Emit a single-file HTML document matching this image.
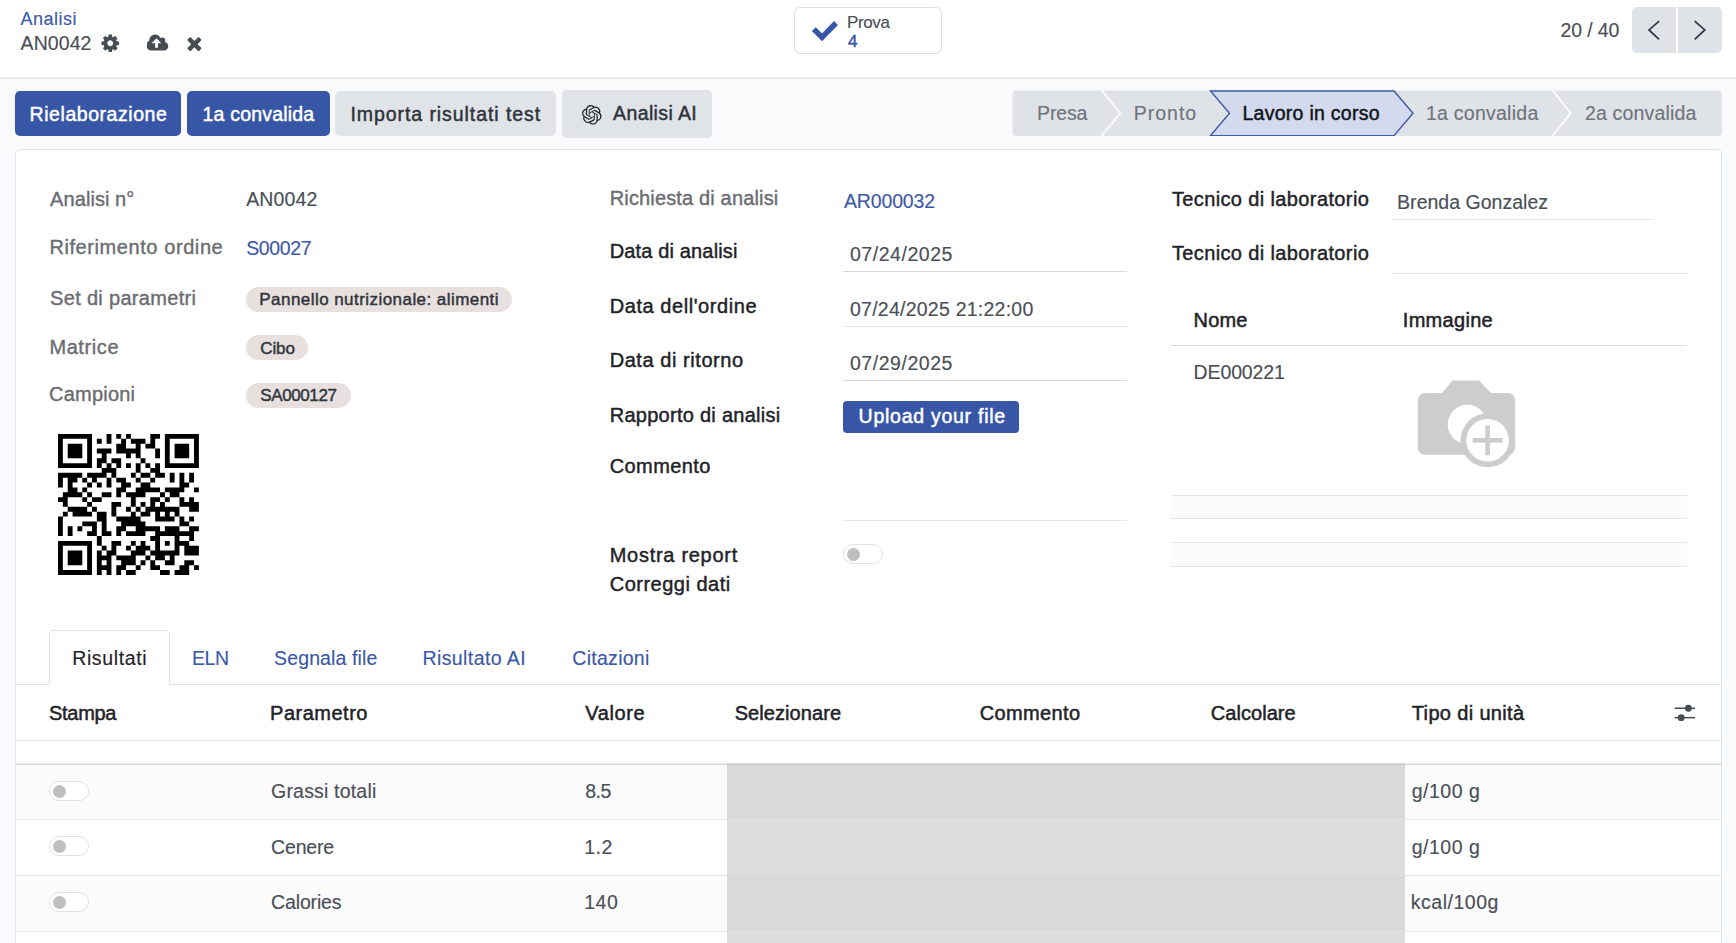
<!DOCTYPE html>
<html lang="it">
<head>
<meta charset="utf-8">
<title>Analisi - AN0042</title>
<style>
*{box-sizing:border-box}
html,body{margin:0;padding:0}
body{width:1736px;height:943px;overflow:hidden;position:relative;background:#f9fafb;font-family:"Liberation Sans",sans-serif;font-size:19.5px;color:#4a4f57}
.t{position:absolute;white-space:pre;line-height:normal;margin:0;padding:0}
.abs{position:absolute}
header.cp{position:absolute;left:0;top:0;width:1736px;height:79px;background:#fff;border-bottom:1px solid #e4e7eb}
header.cp:after{content:'';position:absolute;left:0;top:77px;width:100%;height:1px;background:#eef0f3}
.statbtn{position:absolute;left:794px;top:7px;width:148px;height:46.5px;border:1px solid #d9dde6;border-radius:6px;background:#fff}
.pager button{position:absolute;top:7px;height:46px;border:0;padding:0;background:#dfe2e7}
.pager .prev{left:1632px;width:44px;border-radius:5px 0 0 5px}
.pager .next{left:1678px;width:44px;border-radius:0 5px 5px 0}
.btn{position:absolute;border:0;border-radius:5px;padding:0}
.btn.pri{background:#3757a6}
.btn.sec{background:#e0e3e8}
.sheet{position:absolute;left:15px;top:149px;width:1707px;height:820px;background:#fff;border:1px solid #dfe3e8;border-radius:5px 5px 0 0}
.chip{position:absolute;height:25px;border-radius:13px;background:#e8e0df}
.uline{position:absolute;height:1px;background:#d5dae0}
.tog{position:absolute;width:40px;height:20px;border:1px solid #dde1e5;border-radius:10px;background:#fff}
.tog i{position:absolute;left:3px;top:2.5px;width:13px;height:13px;border-radius:50%;background:#bebebe}
.tab-active{position:absolute;left:49px;top:630px;width:121px;height:55px;border:1px solid #dfe3e8;border-bottom-color:#fff;border-radius:5px 5px 0 0;background:#fff}
.hl{position:absolute;left:16px;width:1705px;height:1px;background:#dfe3e8}
.row{position:absolute;left:16px;width:1705px}
.greycell{position:absolute;left:727px;width:678px;background:#d9d9d9}
</style>
</head>
<body>

<!-- ======= control panel ======= -->
<header class="cp">
  <nav class="breadcrumb"><span class="t" style="left:20.60px;top:9px;font-size:18px;color:#3b59a6;letter-spacing:0.496px;-webkit-text-stroke:0.15px #3b59a6;">Analisi</span><span class="t" style="left:20.60px;top:32px;font-size:19.5px;color:#4a4f57;letter-spacing:0.075px;-webkit-text-stroke:0.15px #4a4f57;">AN0042</span></nav>
  <svg class="abs" style="left:99.93px;top:33.13px" width="20.53" height="20.53" viewBox="0 0 1792 1792"><path fill="#474b52" d="M1152 896q0-106-75-181t-181-75-181 75-75 181 75 181 181 75 181-75 75-181zm512-109v222q0 12-8 23t-20 13l-185 28q-19 54-39 91 35 50 107 138 10 12 10 25t-9 23q-27 37-99 108t-94 71q-12 0-26-9l-138-108q-44 23-91 38-16 136-29 186-7 28-36 28h-222q-14 0-24.500-8.500t-11.500-21.500l-28-184q-49-16-90-37l-141 107q-10 9-25 9-14 0-25-11-126-114-165-168-7-10-7-23 0-12 8-23 15-21 51-66.500t54-70.500q-27-50-41-99l-183-27q-13-2-21-12.500t-8-23.500v-222q0-12 8-23t19-13l186-28q14-46 39-92-40-57-107-138-10-12-10-24 0-10 9-23 26-36 98.500-107.500t94.500-71.500q13 0 26 10l138 107q44-23 91-38 16-136 29-186 7-28 36-28h222q14 0 24.500 8.500t11.500 21.500l28 184q49 16 90 37l142-107q9-9 24-9 13 0 25 10 129 119 165 170 7 8 7 22 0 12-8 23-15 21-51 66.500t-54 70.500q26 50 41 98l183 28q13 2 21 12.500t8 23.500z"/></svg>
  <svg class="abs" style="left:147.3px;top:32.67px" width="22" height="20.53" viewBox="0 0 1920 1792"><path fill="#474b52" d="M1216 864q0-14-9-23l-352-352q-9-9-23-9t-23 9l-351 351q-10 12-10 24 0 14 9 23t23 9h224v352q0 13 9.500 22.500t22.500 9.500h192q13 0 22.500-9.500t9.500-22.500v-352h224q13 0 22.500-9.500t9.500-22.500zm640 288q0 159-112.500 271.500t-271.500 112.500h-1088q-185 0-316.500-131.500t-131.500-316.500q0-130 70-240t188-165q-2-30-2-43 0-212 150-362t362-150q156 0 285.500 87t188.500 231q71-62 166-62 106 0 181 75t75 181q0 76-41 138 130 31 213.500 135.500t83.500 238.500z"/></svg>
  <svg class="abs" style="left:184.2px;top:33.05px" width="20.79" height="20.79" viewBox="0 0 1792 1792"><path fill="#474b52" d="M1490 1322q0 40-28 68l-136 136q-28 28-68 28t-68-28l-294-294-294 294q-28 28-68 28t-68-28l-136-136q-28-28-28-68t28-68l294-294-294-294q-28-28-28-68t28-68l136-136q28-28 68-28t68 28l294 294 294-294q28-28 68-28t68 28l136 136q28 28 28 68t-28 68l-294 294 294 294q28 28 28 68z"/></svg>
  <div class="statbtn"></div>
  <svg class="abs" style="left:805px;top:15px" width="40" height="32" viewBox="805 15 40 32"><polyline points="813.85,29.1 822,37.3 836,23.0" fill="none" stroke="#3757a6" stroke-width="5.5" stroke-linejoin="miter"/></svg>
  <span class="t" style="left:847.00px;top:13px;font-size:17px;color:#4a4f57;letter-spacing:-0.389px;-webkit-text-stroke:0.15px #4a4f57;">Prova</span><span class="t" style="left:848.00px;top:32px;font-size:17px;color:#3757a6;-webkit-text-stroke:0.5px #3757a6;">4</span>
  <div class="pager"><span class="t" style="left:1560.40px;top:19px;font-size:19.5px;color:#4a4f57;letter-spacing:-0.098px;-webkit-text-stroke:0.15px #4a4f57;">20 / 40</span>
    <button class="prev" aria-label="Precedente"></button>
    <button class="next" aria-label="Successivo"></button>
    <svg class="abs" style="left:1632px;top:7px" width="90" height="46" viewBox="1632 7 90 46"><polyline points="1659.1,21.1 1649,29.9 1659.1,39.3" fill="none" stroke="#2f3640" stroke-width="1.7"/><polyline points="1694.7,21.1 1704.8,29.9 1694.7,39.3" fill="none" stroke="#2f3640" stroke-width="1.7"/></svg>
  </div>
</header>

<!-- ======= status bar ======= -->
<section class="statusbar">
  <button class="btn pri" style="left:15px;top:91px;width:166px;height:45px"></button>
  <button class="btn pri" style="left:187px;top:91px;width:143px;height:45px"></button>
  <button class="btn sec" style="left:335px;top:91px;width:221px;height:45px"></button>
  <button class="btn sec" style="left:562px;top:90px;width:150px;height:47.5px"></button>
  <span class="t" style="left:29.60px;top:103px;font-size:19.5px;color:#ffffff;letter-spacing:0.551px;-webkit-text-stroke:0.45px #ffffff;">Rielaborazione</span><span class="t" style="left:202.60px;top:103px;font-size:19.5px;color:#ffffff;letter-spacing:0.177px;-webkit-text-stroke:0.45px #ffffff;">1a convalida</span><span class="t" style="left:350.40px;top:103px;font-size:19.5px;color:#2e333b;letter-spacing:0.937px;-webkit-text-stroke:0.45px #2e333b;">Importa risultati test</span><span class="t" style="left:613.00px;top:102px;font-size:19.5px;color:#2e333b;letter-spacing:0.393px;-webkit-text-stroke:0.45px #2e333b;">Analisi AI</span>
  <svg class="abs" style="left:582.2px;top:104.8px;overflow:visible" width="19.6" height="19.6" viewBox="0 0 24 24"><path fill="#22262b" d="M22.2819 9.8211a5.9847 5.9847 0 0 0-.5157-4.9108 6.0462 6.0462 0 0 0-6.5098-2.9A6.0651 6.0651 0 0 0 4.9807 4.1818a5.9847 5.9847 0 0 0-3.9977 2.9 6.0462 6.0462 0 0 0 .7427 7.0966 5.98 5.98 0 0 0 .511 4.9107 6.051 6.051 0 0 0 6.5146 2.9001A5.9847 5.9847 0 0 0 13.2599 24a6.0557 6.0557 0 0 0 5.7718-4.2058 5.9894 5.9894 0 0 0 3.9977-2.9001 6.0557 6.0557 0 0 0-.7475-7.0729zm-9.022 12.6081a4.4755 4.4755 0 0 1-2.8764-1.0408l.1419-.0804 4.7783-2.7582a.7948.7948 0 0 0 .3927-.6813v-6.7369l2.02 1.1686a.071.071 0 0 1 .038.052v5.5826a4.504 4.504 0 0 1-4.4945 4.4944zm-9.6607-4.1254a4.4708 4.4708 0 0 1-.5346-3.0137l.142.0852 4.783 2.7582a.7712.7712 0 0 0 .7806 0l5.8428-3.3685v2.3324a.0804.0804 0 0 1-.0332.0615L9.74 19.9502a4.4992 4.4992 0 0 1-6.1408-1.6464zM2.3408 7.8956a4.485 4.485 0 0 1 2.3655-1.9728V11.6a.7664.7664 0 0 0 .3879.6765l5.8144 3.3543-2.0201 1.1685a.0757.0757 0 0 1-.071 0l-4.8303-2.7865A4.504 4.504 0 0 1 2.3408 7.872zm16.5963 3.8558L13.1038 8.364 15.1192 7.2a.0757.0757 0 0 1 .071 0l4.8303 2.7913a4.4944 4.4944 0 0 1-.6765 8.1042v-5.6772a.79.79 0 0 0-.407-.667zm2.0107-3.0231l-.142-.0852-4.7735-2.7818a.7759.7759 0 0 0-.7854 0L9.409 9.2297V6.8974a.0662.0662 0 0 1 .0284-.0615l4.8303-2.7866a4.4992 4.4992 0 0 1 6.6802 4.66zM8.3065 12.863l-2.02-1.1638a.0804.0804 0 0 1-.038-.0567V6.0742a4.4992 4.4992 0 0 1 7.3757-3.4537l-.142.0805L8.704 5.459a.7948.7948 0 0 0-.3927.6813zm1.0976-2.3654l2.602-1.4998 2.6069 1.4998v2.9994l-2.5974 1.4997-2.6067-1.4997Z"/></svg>
  <svg class="abs" style="left:1012px;top:90px" width="710" height="46" viewBox="0 0 710 46">
    <rect x="0.5" y="0.5" width="709.5" height="45.5" rx="4" fill="#dfe2e7"/>
    <polyline points="89.4,0 108.3,23.2 89.4,46" fill="none" stroke="#f9fafb" stroke-width="2"/>
    <polyline points="540.4,0 558.6,23.2 540.4,46" fill="none" stroke="#f9fafb" stroke-width="2"/>
    <polygon points="198.5,1 382,1 401,23.2 382,45.6 198.5,45.6 217.5,23.2" fill="#d4daed" stroke="#3b59a6" stroke-width="1.4" stroke-linejoin="miter"/>
  </svg>
  <span class="t" style="left:1037.00px;top:102px;font-size:19.5px;color:#6f747b;letter-spacing:-0.124px;-webkit-text-stroke:0.15px #6f747b;">Presa</span><span class="t" style="left:1133.80px;top:102px;font-size:19.5px;color:#6f747b;letter-spacing:0.978px;-webkit-text-stroke:0.15px #6f747b;">Pronto</span><span class="t" style="left:1242.50px;top:102px;font-size:19.5px;color:#111418;letter-spacing:0.266px;-webkit-text-stroke:0.45px #111418;">Lavoro in corso</span><span class="t" style="left:1425.90px;top:102px;font-size:19.5px;color:#6f747b;letter-spacing:0.259px;-webkit-text-stroke:0.15px #6f747b;">1a convalida</span><span class="t" style="left:1585.00px;top:102px;font-size:19.5px;color:#6f747b;letter-spacing:0.168px;-webkit-text-stroke:0.15px #6f747b;">2a convalida</span>
</section>

<!-- ======= form sheet ======= -->
<main class="sheet"></main>

<section class="group-left">
  <div class="chip" style="left:245.6px;top:287px;width:266.4px"></div>
  <div class="chip" style="left:245.6px;top:335.2px;width:62.6px"></div>
  <div class="chip" style="left:245.6px;top:383.2px;width:105px"></div>
  <svg class="abs qr" style="left:57.9px;top:433.7px" width="140.9" height="140.9" viewBox="0 0 29 29" role="img" aria-label="QR"><path fill="#000" d="M0 0h7v1h-7zM10 0h1v1h-1zM12 0h1v1h-1zM14 0h1v1h-1zM19 0h2v1h-2zM22 0h7v1h-7zM0 1h1v1h-1zM6 1h1v1h-1zM8 1h1v1h-1zM10 1h1v1h-1zM13 1h1v1h-1zM15 1h3v1h-3zM19 1h1v1h-1zM22 1h1v1h-1zM28 1h1v1h-1zM0 2h1v1h-1zM2 2h3v1h-3zM6 2h1v1h-1zM12 2h2v1h-2zM16 2h1v1h-1zM18 2h2v1h-2zM22 2h1v1h-1zM24 2h3v1h-3zM28 2h1v1h-1zM0 3h1v1h-1zM2 3h3v1h-3zM6 3h1v1h-1zM8 3h3v1h-3zM12 3h5v1h-5zM20 3h1v1h-1zM22 3h1v1h-1zM24 3h3v1h-3zM28 3h1v1h-1zM0 4h1v1h-1zM2 4h3v1h-3zM6 4h1v1h-1zM9 4h1v1h-1zM14 4h1v1h-1zM16 4h1v1h-1zM20 4h1v1h-1zM22 4h1v1h-1zM24 4h3v1h-3zM28 4h1v1h-1zM0 5h1v1h-1zM6 5h1v1h-1zM8 5h2v1h-2zM11 5h2v1h-2zM17 5h1v1h-1zM22 5h1v1h-1zM28 5h1v1h-1zM0 6h7v1h-7zM8 6h1v1h-1zM10 6h1v1h-1zM12 6h1v1h-1zM14 6h1v1h-1zM16 6h1v1h-1zM18 6h1v1h-1zM20 6h1v1h-1zM22 6h7v1h-7zM9 7h3v1h-3zM16 7h1v1h-1zM19 7h2v1h-2zM0 8h5v1h-5zM6 8h4v1h-4zM11 8h1v1h-1zM15 8h1v1h-1zM17 8h2v1h-2zM20 8h2v1h-2zM23 8h1v1h-1zM25 8h1v1h-1zM27 8h1v1h-1zM0 9h1v1h-1zM2 9h2v1h-2zM5 9h1v1h-1zM7 9h1v1h-1zM10 9h1v1h-1zM12 9h2v1h-2zM16 9h1v1h-1zM19 9h1v1h-1zM23 9h1v1h-1zM25 9h1v1h-1zM27 9h1v1h-1zM0 10h1v1h-1zM2 10h1v1h-1zM6 10h1v1h-1zM8 10h1v1h-1zM10 10h1v1h-1zM13 10h2v1h-2zM17 10h2v1h-2zM25 10h2v1h-2zM2 11h2v1h-2zM5 11h1v1h-1zM12 11h2v1h-2zM16 11h5v1h-5zM22 11h4v1h-4zM28 11h1v1h-1zM1 12h4v1h-4zM6 12h1v1h-1zM9 12h2v1h-2zM12 12h1v1h-1zM14 12h4v1h-4zM21 12h1v1h-1zM23 12h2v1h-2zM0 13h2v1h-2zM5 13h1v1h-1zM7 13h2v1h-2zM15 13h1v1h-1zM19 13h2v1h-2zM22 13h1v1h-1zM25 13h1v1h-1zM27 13h1v1h-1zM1 14h1v1h-1zM6 14h1v1h-1zM11 14h2v1h-2zM15 14h1v1h-1zM17 14h1v1h-1zM19 14h1v1h-1zM21 14h1v1h-1zM25 14h4v1h-4zM2 15h4v1h-4zM7 15h1v1h-1zM11 15h1v1h-1zM14 15h1v1h-1zM16 15h1v1h-1zM18 15h7v1h-7zM27 15h2v1h-2zM1 16h1v1h-1zM3 16h4v1h-4zM8 16h2v1h-2zM11 16h1v1h-1zM15 16h1v1h-1zM17 16h2v1h-2zM20 16h1v1h-1zM22 16h1v1h-1zM24 16h1v1h-1zM0 17h1v1h-1zM8 17h2v1h-2zM12 17h5v1h-5zM20 17h4v1h-4zM25 17h1v1h-1zM27 17h1v1h-1zM0 18h1v1h-1zM5 18h3v1h-3zM9 18h1v1h-1zM13 18h5v1h-5zM25 18h2v1h-2zM0 19h1v1h-1zM2 19h1v1h-1zM4 19h1v1h-1zM7 19h1v1h-1zM9 19h1v1h-1zM12 19h2v1h-2zM16 19h5v1h-5zM22 19h3v1h-3zM27 19h2v1h-2zM0 20h1v1h-1zM2 20h1v1h-1zM6 20h2v1h-2zM9 20h2v1h-2zM12 20h1v1h-1zM14 20h4v1h-4zM20 20h8v1h-8zM8 21h1v1h-1zM19 21h2v1h-2zM24 21h1v1h-1zM27 21h1v1h-1zM0 22h7v1h-7zM8 22h1v1h-1zM11 22h2v1h-2zM15 22h1v1h-1zM17 22h1v1h-1zM20 22h1v1h-1zM22 22h1v1h-1zM24 22h3v1h-3zM0 23h1v1h-1zM6 23h1v1h-1zM9 23h1v1h-1zM11 23h1v1h-1zM14 23h1v1h-1zM16 23h3v1h-3zM20 23h1v1h-1zM24 23h1v1h-1zM26 23h3v1h-3zM0 24h1v1h-1zM2 24h3v1h-3zM6 24h1v1h-1zM8 24h1v1h-1zM10 24h2v1h-2zM15 24h3v1h-3zM19 24h6v1h-6zM26 24h3v1h-3zM0 25h1v1h-1zM2 25h3v1h-3zM6 25h1v1h-1zM8 25h3v1h-3zM12 25h4v1h-4zM18 25h1v1h-1zM20 25h2v1h-2zM23 25h1v1h-1zM0 26h1v1h-1zM2 26h3v1h-3zM6 26h1v1h-1zM8 26h1v1h-1zM10 26h1v1h-1zM13 26h3v1h-3zM17 26h1v1h-1zM19 26h1v1h-1zM22 26h2v1h-2zM26 26h2v1h-2zM0 27h1v1h-1zM6 27h1v1h-1zM8 27h3v1h-3zM12 27h2v1h-2zM16 27h1v1h-1zM19 27h2v1h-2zM25 27h2v1h-2zM28 27h1v1h-1zM0 28h7v1h-7zM8 28h1v1h-1zM10 28h1v1h-1zM12 28h1v1h-1zM14 28h2v1h-2zM21 28h2v1h-2zM24 28h3v1h-3z"/></svg>
</section>

<section class="group-mid">
  <div class="uline" style="left:843px;top:270.8px;width:283.5px"></div>
  <div class="uline" style="left:843px;top:325.5px;width:283.5px;background:#e4e7eb"></div>
  <div class="uline" style="left:843px;top:380px;width:283.5px"></div>
  <button class="btn pri" style="left:843.4px;top:400.5px;width:176px;height:32px;border-radius:4px"></button>
  <div class="uline" style="left:843px;top:519.8px;width:283.5px;background:#e4e7eb"></div>
  <div class="tog" style="left:843px;top:544px"><i></i></div>
</section>

<section class="group-right">
  <div class="uline" style="left:1391.7px;top:219px;width:262px;background:#e4e7eb"></div>
  <div class="uline" style="left:1391.7px;top:273.3px;width:295px;background:#e4e7eb"></div>
  <div class="uline" style="left:1171px;top:345px;width:515.7px;background:#d8dbdf"></div>
  <div class="abs" style="left:1171px;top:495px;width:515.7px;height:24px;background:#fbfbfc;border-top:1px solid #e3e6ea;border-bottom:1px solid #e3e6ea"></div>
  <div class="abs" style="left:1171px;top:541.5px;width:515.7px;height:25px;background:#fbfbfc;border-top:1px solid #e3e6ea;border-bottom:1px solid #e3e6ea"></div>
  <svg class="abs" style="left:1417px;top:379px" width="100" height="90" viewBox="1417 379 100 90">
    <path fill="#cdcdcd" d="M1452.5 380.5h26.5l12 12.5h17a7.200 7.200 0 0 1 7.200 7.200v47.400a7.200 7.200 0 0 1-7.200 7.200h-83a7.200 7.200 0 0 1-7.200-7.200v-47.400a7.200 7.200 0 0 1 7.200-7.200h17z"/>
    <circle cx="1467.3" cy="424.4" r="19.6" fill="#fff"/>
    <circle cx="1487.6" cy="440.3" r="27" fill="#cdcdcd"/>
    <circle cx="1487.6" cy="440.3" r="21.3" fill="#fff"/>
    <rect x="1472.600" y="437.950" width="30" height="4.700" fill="#cdcdcd"/>
    <rect x="1485.250" y="425.300" width="4.700" height="30" fill="#cdcdcd"/>
  </svg>
</section>

<!-- ======= notebook ======= -->
<section class="notebook">
  <div class="hl" style="top:684px"></div>
  <div class="tab-active"></div>
  <div class="hl" style="top:740px;background:#e4e7eb"></div>
  <div class="row" style="top:765px;height:54px;background:#fbfbfb"></div>
  <div class="row" style="top:876px;height:55px;background:#fbfbfb"></div>
  <div class="greycell" style="top:765px;height:54px;background:#d9d9d9"></div>
  <div class="greycell" style="top:820px;height:55px;background:#dcdcdc"></div>
  <div class="greycell" style="top:876px;height:55px;background:#d9d9d9"></div>
  <div class="greycell" style="top:932px;height:11px;background:#dcdcdc"></div>
  <div class="hl" style="top:763px;background:#e9eaec"></div>
  <div class="hl" style="top:764px;background:#d6d8db"></div>
  <div class="greycell" style="top:763px;height:1px;background:#dedede"></div>
  <div class="greycell" style="top:764px;height:1px;background:#c9c9c9"></div>
  <div class="hl" style="top:819px;background:#e4e7ea"></div>
  <div class="hl" style="top:875px;background:#e4e7ea"></div>
  <div class="hl" style="top:931px;background:#e4e7ea"></div>
  <div class="greycell" style="top:819px;height:1px;background:#dee1e4"></div>
  <div class="greycell" style="top:875px;height:1px;background:#dee1e4"></div>
  <div class="greycell" style="top:931px;height:1px;background:#dee1e4"></div>
  <div class="tog" style="left:49px;top:781px"><i></i></div>
  <div class="tog" style="left:49px;top:836px"><i></i></div>
  <div class="tog" style="left:49px;top:892px"><i></i></div>
  <svg class="abs" style="left:1673px;top:703px" width="24" height="20" viewBox="1673 703 24 20">
    <g stroke="#474c55" stroke-width="1.5" fill="none"><line x1="1674.6" y1="708.25" x2="1695" y2="708.25"/><line x1="1674.6" y1="717.65" x2="1695" y2="717.65"/></g>
    <circle cx="1688.4" cy="708.25" r="3.4" fill="#474c55"/><circle cx="1681.2" cy="717.65" r="3.4" fill="#474c55"/>
  </svg>
</section>

<span class="t" style="left:50.10px;top:188px;font-size:20px;color:#6b6d72;letter-spacing:0.067px;-webkit-text-stroke:0.4px #6b6d72;">Analisi n°</span>
<span class="t" style="left:49.40px;top:236px;font-size:20px;color:#6b6d72;letter-spacing:0.583px;-webkit-text-stroke:0.4px #6b6d72;">Riferimento ordine</span>
<span class="t" style="left:50.10px;top:287px;font-size:20px;color:#6b6d72;letter-spacing:0.311px;-webkit-text-stroke:0.4px #6b6d72;">Set di parametri</span>
<span class="t" style="left:49.40px;top:336px;font-size:20px;color:#6b6d72;letter-spacing:0.593px;-webkit-text-stroke:0.4px #6b6d72;">Matrice</span>
<span class="t" style="left:49.10px;top:383px;font-size:20px;color:#6b6d72;letter-spacing:0.209px;-webkit-text-stroke:0.4px #6b6d72;">Campioni</span>
<span class="t" style="left:246.20px;top:188px;font-size:19.5px;color:#4a4f57;letter-spacing:0.115px;-webkit-text-stroke:0.15px #4a4f57;">AN0042</span>
<span class="t" style="left:246.20px;top:237px;font-size:19.5px;color:#3b59a6;letter-spacing:-0.377px;-webkit-text-stroke:0.15px #3b59a6;">S00027</span>
<span class="t" style="left:259.30px;top:290px;font-size:17px;color:#30353b;letter-spacing:0.447px;-webkit-text-stroke:0.45px #30353b;">Pannello nutrizionale: alimenti</span>
<span class="t" style="left:260.30px;top:339px;font-size:17px;color:#30353b;letter-spacing:-0.136px;-webkit-text-stroke:0.45px #30353b;">Cibo</span>
<span class="t" style="left:260.30px;top:386px;font-size:17px;color:#30353b;letter-spacing:-0.393px;-webkit-text-stroke:0.45px #30353b;">SA000127</span>
<span class="t" style="left:609.70px;top:187px;font-size:20px;color:#6b6d72;letter-spacing:0.153px;-webkit-text-stroke:0.4px #6b6d72;">Richiesta di analisi</span>
<span class="t" style="left:844.00px;top:190px;font-size:19.5px;color:#3b59a6;letter-spacing:-0.159px;-webkit-text-stroke:0.15px #3b59a6;">AR000032</span>
<span class="t" style="left:609.70px;top:240px;font-size:20px;color:#1f2328;letter-spacing:0.151px;-webkit-text-stroke:0.45px #1f2328;">Data di analisi</span>
<span class="t" style="left:850.00px;top:243px;font-size:19.5px;color:#4a4f57;letter-spacing:0.528px;-webkit-text-stroke:0.15px #4a4f57;">07/24/2025</span>
<span class="t" style="left:609.70px;top:295px;font-size:20px;color:#1f2328;letter-spacing:0.565px;-webkit-text-stroke:0.45px #1f2328;">Data dell&#x27;ordine</span>
<span class="t" style="left:850.00px;top:298px;font-size:19.5px;color:#4a4f57;letter-spacing:0.240px;-webkit-text-stroke:0.15px #4a4f57;">07/24/2025 21:22:00</span>
<span class="t" style="left:609.70px;top:349px;font-size:20px;color:#1f2328;letter-spacing:0.558px;-webkit-text-stroke:0.45px #1f2328;">Data di ritorno</span>
<span class="t" style="left:850.00px;top:352px;font-size:19.5px;color:#4a4f57;letter-spacing:0.528px;-webkit-text-stroke:0.15px #4a4f57;">07/29/2025</span>
<span class="t" style="left:609.70px;top:404px;font-size:20px;color:#1f2328;letter-spacing:0.272px;-webkit-text-stroke:0.45px #1f2328;">Rapporto di analisi</span>
<span class="t" style="left:858.60px;top:405px;font-size:19.5px;color:#ffffff;letter-spacing:0.737px;-webkit-text-stroke:0.5px #ffffff;">Upload your file</span>
<span class="t" style="left:609.70px;top:455px;font-size:20px;color:#1f2328;letter-spacing:0.416px;-webkit-text-stroke:0.45px #1f2328;">Commento</span>
<span class="t" style="left:609.70px;top:544px;font-size:20px;color:#1f2328;letter-spacing:0.719px;-webkit-text-stroke:0.45px #1f2328;">Mostra report</span>
<span class="t" style="left:609.70px;top:573px;font-size:20px;color:#1f2328;letter-spacing:0.495px;-webkit-text-stroke:0.45px #1f2328;">Correggi dati</span>
<span class="t" style="left:1171.90px;top:188px;font-size:20px;color:#1f2328;letter-spacing:0.378px;-webkit-text-stroke:0.45px #1f2328;">Tecnico di laboratorio</span>
<span class="t" style="left:1397.10px;top:191px;font-size:19.5px;color:#4a4f57;letter-spacing:0.019px;-webkit-text-stroke:0.15px #4a4f57;">Brenda Gonzalez</span>
<span class="t" style="left:1171.90px;top:242px;font-size:20px;color:#1f2328;letter-spacing:0.378px;-webkit-text-stroke:0.45px #1f2328;">Tecnico di laboratorio</span>
<span class="t" style="left:1193.60px;top:309px;font-size:20px;color:#1f2328;letter-spacing:0.124px;-webkit-text-stroke:0.5px #1f2328;">Nome</span>
<span class="t" style="left:1402.80px;top:309px;font-size:20px;color:#1f2328;letter-spacing:0.302px;-webkit-text-stroke:0.5px #1f2328;">Immagine</span>
<span class="t" style="left:1193.60px;top:361px;font-size:19.5px;color:#4a4f57;letter-spacing:-0.130px;-webkit-text-stroke:0.15px #4a4f57;">DE000221</span>
<span class="t" style="left:72.20px;top:647px;font-size:19.5px;color:#1f2328;letter-spacing:0.635px;-webkit-text-stroke:0.15px #1f2328;">Risultati</span>
<span class="t" style="left:191.90px;top:647px;font-size:19.5px;color:#3b59a6;letter-spacing:-0.376px;-webkit-text-stroke:0.15px #3b59a6;">ELN</span>
<span class="t" style="left:274.10px;top:647px;font-size:19.5px;color:#3b59a6;letter-spacing:0.112px;-webkit-text-stroke:0.15px #3b59a6;">Segnala file</span>
<span class="t" style="left:422.50px;top:647px;font-size:19.5px;color:#3b59a6;letter-spacing:0.401px;-webkit-text-stroke:0.15px #3b59a6;">Risultato AI</span>
<span class="t" style="left:572.30px;top:647px;font-size:19.5px;color:#3b59a6;letter-spacing:0.281px;-webkit-text-stroke:0.15px #3b59a6;">Citazioni</span>
<span class="t" style="left:49.10px;top:702px;font-size:20px;color:#1f2328;letter-spacing:-0.321px;-webkit-text-stroke:0.5px #1f2328;">Stampa</span>
<span class="t" style="left:270.10px;top:702px;font-size:20px;color:#1f2328;letter-spacing:0.494px;-webkit-text-stroke:0.5px #1f2328;">Parametro</span>
<span class="t" style="left:585.30px;top:702px;font-size:20px;color:#1f2328;letter-spacing:0.599px;-webkit-text-stroke:0.5px #1f2328;">Valore</span>
<span class="t" style="left:734.70px;top:702px;font-size:20px;color:#1f2328;letter-spacing:0.070px;-webkit-text-stroke:0.5px #1f2328;">Selezionare</span>
<span class="t" style="left:979.80px;top:702px;font-size:20px;color:#1f2328;letter-spacing:0.359px;-webkit-text-stroke:0.5px #1f2328;">Commento</span>
<span class="t" style="left:1210.80px;top:702px;font-size:20px;color:#1f2328;letter-spacing:0.043px;-webkit-text-stroke:0.5px #1f2328;">Calcolare</span>
<span class="t" style="left:1411.80px;top:702px;font-size:20px;color:#1f2328;letter-spacing:0.343px;-webkit-text-stroke:0.5px #1f2328;">Tipo di unità</span>
<span class="t" style="left:271.10px;top:780px;font-size:19.5px;color:#4a4f57;letter-spacing:0.182px;-webkit-text-stroke:0.15px #4a4f57;">Grassi totali</span>
<span class="t" style="left:585.30px;top:780px;font-size:19.5px;color:#4a4f57;letter-spacing:-0.581px;-webkit-text-stroke:0.15px #4a4f57;">8.5</span>
<span class="t" style="left:1411.80px;top:780px;font-size:19.5px;color:#4a4f57;letter-spacing:0.481px;-webkit-text-stroke:0.15px #4a4f57;">g/100 g</span>
<span class="t" style="left:271.10px;top:836px;font-size:19.5px;color:#4a4f57;letter-spacing:-0.182px;-webkit-text-stroke:0.15px #4a4f57;">Cenere</span>
<span class="t" style="left:584.30px;top:836px;font-size:19.5px;color:#4a4f57;letter-spacing:0.419px;-webkit-text-stroke:0.15px #4a4f57;">1.2</span>
<span class="t" style="left:1411.80px;top:836px;font-size:19.5px;color:#4a4f57;letter-spacing:0.481px;-webkit-text-stroke:0.15px #4a4f57;">g/100 g</span>
<span class="t" style="left:271.10px;top:891px;font-size:19.5px;color:#4a4f57;letter-spacing:-0.154px;-webkit-text-stroke:0.15px #4a4f57;">Calories</span>
<span class="t" style="left:584.30px;top:891px;font-size:19.5px;color:#4a4f57;letter-spacing:0.455px;-webkit-text-stroke:0.15px #4a4f57;">140</span>
<span class="t" style="left:1410.80px;top:891px;font-size:19.5px;color:#4a4f57;letter-spacing:0.509px;-webkit-text-stroke:0.15px #4a4f57;">kcal/100g</span>
</body>
</html>
